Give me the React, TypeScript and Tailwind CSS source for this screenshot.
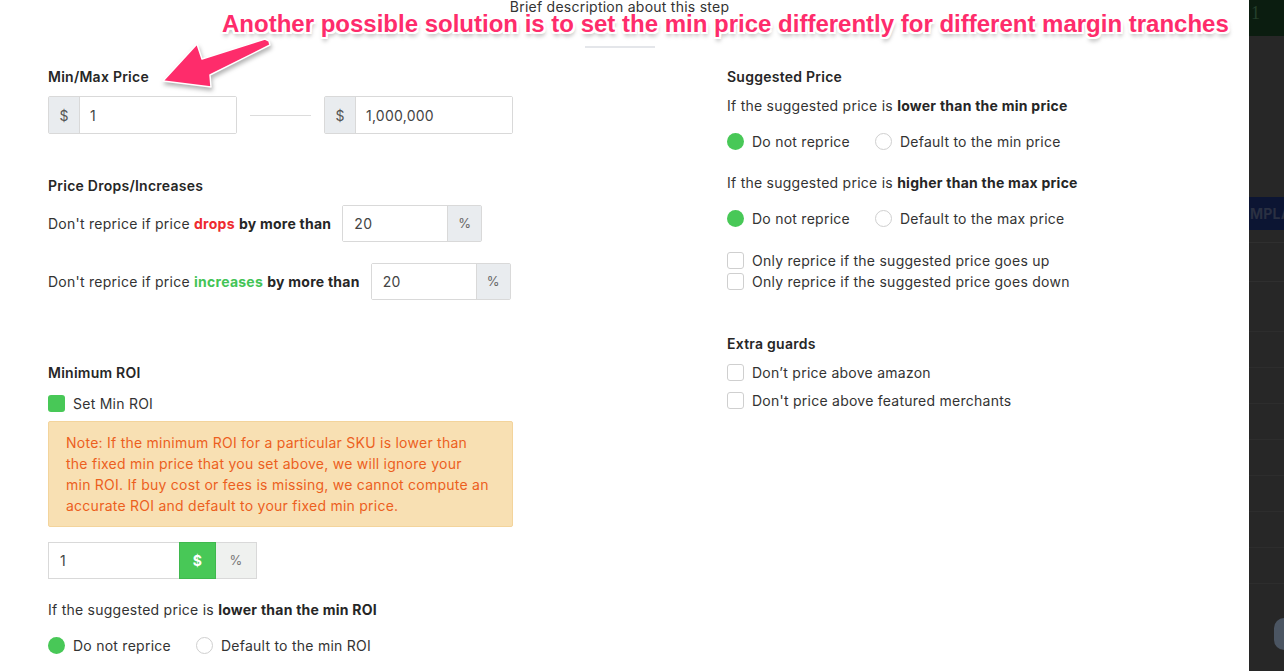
import React from 'react';

const font = { fontFamily: 'Inter, "Noto Sans", sans-serif' };

const Radio: React.FC<{ on?: boolean; label: string }> = ({ on, label }) => (
  <div className="flex items-center gap-[8px] h-[20px]">
    {on ? (
      <span className="w-[17px] h-[17px] rounded-full bg-[#48c857]" />
    ) : (
      <span className="w-[17px] h-[17px] rounded-full border border-[#cfcfcf] bg-white" />
    )}
    <span>{label}</span>
  </div>
);

const Check: React.FC<{ on?: boolean; label: string }> = ({ on, label }) => (
  <div className="flex items-center gap-[8px] h-[21px]">
    {on ? (
      <span className="w-[17px] h-[17px] rounded-[3px] bg-[#48c857]" />
    ) : (
      <span className="w-[17px] h-[17px] rounded-[3px] border border-[#cfcfcf] bg-white" />
    )}
    <span>{label}</span>
  </div>
);

const DollarInput: React.FC<{ value: string }> = ({ value }) => (
  <div className="flex w-[189px] h-[38px] border border-[#d9d9d9] rounded-[2px]">
    <div className="w-[31px] bg-[#e9ecef] border-r border-[#d9d9d9] flex items-center justify-center text-[#555]">$</div>
    <div className="flex-1 flex items-center pl-[10px] text-[#444] bg-white">{value}</div>
  </div>
);

const PercentInput: React.FC<{ value: string }> = ({ value }) => (
  <div className="flex w-[140px] h-[37px] border border-[#d9d9d9] rounded-[2px]">
    <div className="flex-1 flex items-center pl-[11px] text-[#444] bg-white">{value}</div>
    <div className="w-[34px] bg-[#e9ecef] border-l border-[#d9d9d9] flex items-center justify-center text-[#666] text-[13px]">%</div>
  </div>
);

const App: React.FC = () => {
  return (
    <div className="flex w-[1284px] h-[671px] overflow-hidden bg-white text-[14px] text-[#333] tracking-[0.25px]" style={font}>
      {/* Modal body */}
      <div className="relative w-[1249px] h-full bg-white">
        <div className="flex flex-col items-center">
          <div className="mt-[-3px] leading-[20px] text-[#333] mr-[10px]">Brief description about this step</div>
          <div className="mt-[29px] w-[70px] h-[2px] bg-[#e4e6ea] mr-[10px]" />
        </div>

        <div className="flex pl-[48px] mt-[19px]">
          {/* Left column */}
          <div className="w-[679px] flex flex-col">
            <div className="font-semibold leading-[20px] text-[#262626]">Min/Max Price</div>
            <div className="flex items-center mt-[9px]">
              <DollarInput value="1" />
              <div className="mx-[13px] w-[61px] h-px bg-[#dcdcdc]" />
              <DollarInput value="1,000,000" />
            </div>

            <div className="font-semibold leading-[20px] text-[#262626] mt-[42px]">Price Drops/Increases</div>
            <div className="flex items-center mt-[9px]">
              <span>
                Don't reprice if price <span className="font-bold text-[#ee2a2f]">drops</span>{' '}
                <span className="font-bold text-[#262626]">by more than</span>
              </span>
              <div className="ml-[11px]">
                <PercentInput value="20" />
              </div>
            </div>
            <div className="flex items-center mt-[21px]">
              <span>
                Don't reprice if price <span className="font-bold text-[#43c456]">increases</span>{' '}
                <span className="font-bold text-[#262626]">by more than</span>
              </span>
              <div className="ml-[11px]">
                <PercentInput value="20" />
              </div>
            </div>

            <div className="font-semibold leading-[20px] text-[#262626] mt-[63px]">Minimum ROI</div>
            <div className="mt-[10px]">
              <Check on label="Set Min ROI" />
            </div>
            <div className="mt-[7px] w-[465px] bg-[#f8e0b3] border border-[#f3d49c] rounded-[2px] pl-[17px] pr-[10px] py-[10px] text-[#ec5f1e] leading-[21px] whitespace-nowrap">
              Note: If the minimum ROI for a particular SKU is lower than
              <br />
              the fixed min price that you set above, we will ignore your
              <br />
              min ROI. If buy cost or fees is missing, we cannot compute an
              <br />
              accurate ROI and default to your fixed min price.
            </div>
            <div className="flex mt-[15px] h-[37px] w-[210px]">
              <div className="w-[131px] border border-[#d9d9d9] border-r-0 flex items-center pl-[11px] text-[#444]">1</div>
              <div className="w-[37px] bg-[#48c857] border border-[#3fb84e] text-white font-bold flex items-center justify-center">$</div>
              <div className="w-[41px] bg-[#eff1ef] border border-[#d9d9d9] border-l-0 text-[#777] text-[13px] flex items-center justify-center">%</div>
            </div>
            <div className="mt-[21px] leading-[20px]">
              If the suggested price is <span className="font-bold text-[#262626]">lower than the min ROI</span>
            </div>
            <div className="flex gap-[25px] mt-[15px]">
              <Radio on label="Do not reprice" />
              <Radio label="Default to the min ROI" />
            </div>
          </div>

          {/* Right column */}
          <div className="flex flex-col">
            <div className="font-semibold leading-[20px] text-[#262626]">Suggested Price</div>
            <div className="mt-[9px] leading-[20px]">
              If the suggested price is <span className="font-bold text-[#262626]">lower than the min price</span>
            </div>
            <div className="flex gap-[25px] mt-[15px]">
              <Radio on label="Do not reprice" />
              <Radio label="Default to the min price" />
            </div>
            <div className="mt-[22px] leading-[20px]">
              If the suggested price is <span className="font-bold text-[#262626]">higher than the max price</span>
            </div>
            <div className="flex gap-[25px] mt-[15px]">
              <Radio on label="Do not reprice" />
              <Radio label="Default to the max price" />
            </div>
            <div className="mt-[22px]">
              <Check label="Only reprice if the suggested price goes up" />
              <Check label="Only reprice if the suggested price goes down" />
            </div>
            <div className="font-semibold leading-[20px] text-[#262626] mt-[42px]">Extra guards</div>
            <div className="mt-[8px] flex flex-col gap-[7px]">
              <Check label="Don’t price above amazon" />
              <Check label="Don't price above featured merchants" />
            </div>
          </div>
        </div>

        {/* Annotation */}
        <div
          className="absolute left-[222px] top-[10px] whitespace-nowrap text-[24px] font-bold tracking-normal text-[#fe2c6b] leading-[28px] [text-shadow:-2px_-2px_0_#fff,2px_-2px_0_#fff,-2px_2px_0_#fff,2px_2px_0_#fff,0_-2px_0_#fff,0_2px_0_#fff,-2px_0_0_#fff,2px_0_0_#fff,1px_4px_4px_rgba(0,0,0,0.35)]"
          style={{ fontFamily: '"Liberation Sans", Arial, sans-serif' }}
        >
          Another possible solution is to set the min price differently for different margin tranches
        </div>
        <svg className="absolute left-[150px] top-[30px] w-[130px] h-[70px] [filter:drop-shadow(1px_3px_2px_rgba(0,0,0,0.3))]" viewBox="0 0 130 70">
          <polygon
            points="13,51 47,14 52,29 115,9 119,11 120,15 60,45 61,57"
            fill="#fe2c6b"
            stroke="#fff"
            strokeWidth="1.5"
            strokeLinejoin="round"
          />
        </svg>
      </div>

      {/* Backdrop of page behind modal */}
      <div className="w-[35px] h-full bg-[#272727] flex flex-col">
        <div className="h-[36px] shrink-0 bg-[#0b1d10] text-[#25402c] text-[18px] pl-[2px] leading-[26px]" style={{ fontFamily: '"Liberation Serif", serif' }}>1</div>
        <div className="h-[161px] shrink-0" />
        <div className="h-[33px] shrink-0 bg-[#0c1533] text-[#2a3042] font-bold text-[14px] flex items-center whitespace-nowrap overflow-hidden pl-[1px]">MPLA</div>
        <div className="h-[13px] shrink-0 border-b border-[#2f2f2f]" />
        <div className="h-[39px] shrink-0 border-b border-[#2f2f2f]" />
        <div className="h-[50px] shrink-0 border-b border-[#2d2d2d]" />
        <div className="h-[36px] shrink-0 border-b border-[#2d2d2d]" />
        <div className="h-[36px] shrink-0 border-b border-[#2d2d2d]" />
        <div className="h-[36px] shrink-0 border-b border-[#2d2d2d]" />
        <div className="h-[36px] shrink-0 border-b border-[#2d2d2d]" />
        <div className="h-[36px] shrink-0 border-b border-[#2d2d2d]" />
        <div className="h-[36px] shrink-0 border-b border-[#2d2d2d]" />
        <div className="h-[36px] shrink-0 border-b border-[#2d2d2d]" />
        <div className="flex justify-end shrink-0 mt-[34px]">
          <div className="w-[10px] h-[32px] rounded-l-full bg-[#4b5562]" />
        </div>
      </div>
    </div>
  );
};

export default App;
